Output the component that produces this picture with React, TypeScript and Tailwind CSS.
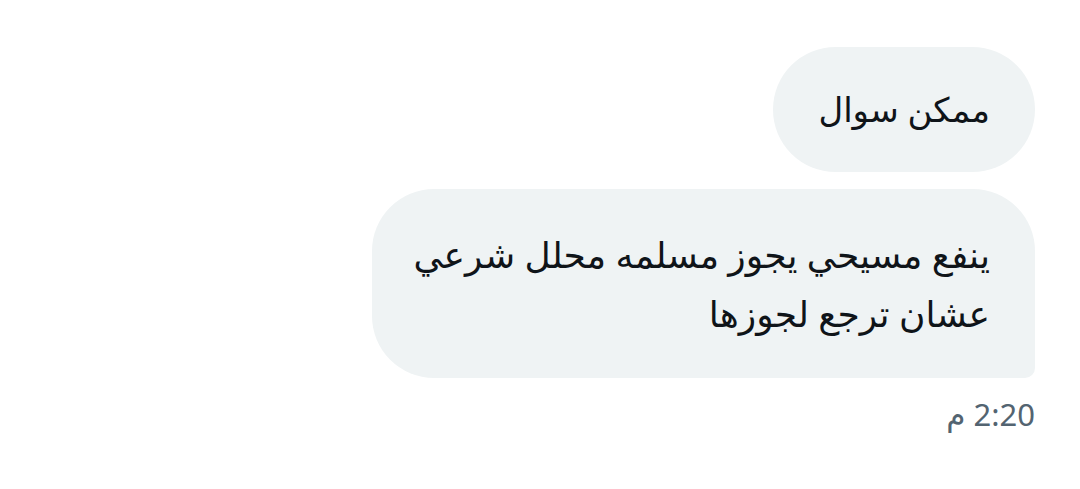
const font = { fontFamily: '"Noto Sans", "DejaVu Sans", sans-serif' };

export default function App() {
  return (
    <div className="w-[1080px] h-[489px] bg-white flex flex-col items-end pt-[47px] pr-[45px]" style={font}>
      <div
        dir="rtl"
        className="bg-[#eff3f4] text-[#0f1419] rounded-[63px] px-[45px] py-[33px] text-[34px] leading-[59px]"
      >
        ممكن سوال
      </div>
      <div
        dir="rtl"
        className="mt-[17px] bg-[#eff3f4] text-[#0f1419] rounded-[62px] rounded-br-[10px] pr-[45px] pl-[42px] pt-[36px] pb-[35px] text-[36px] leading-[59px]"
      >
        <p>ينفع مسيحي يجوز مسلمه محلل شرعي</p>
        <p>عشان ترجع لجوزها</p>
      </div>
      <div dir="rtl" className="mt-[17px] text-[#536471] text-[31px] leading-[38px]">
        2:20 م
      </div>
    </div>
  );
}
